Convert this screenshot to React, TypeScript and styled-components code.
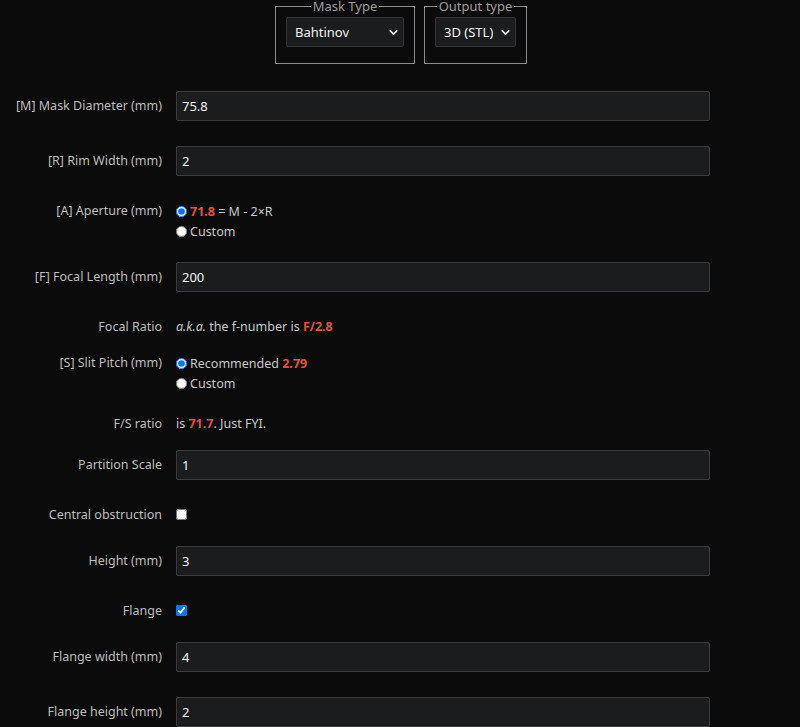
import React from "react";
import styled, { createGlobalStyle } from "styled-components";
import { ChevronDown } from "lucide-react";

const GlobalStyle = createGlobalStyle`
  html, body {
    margin: 0;
    padding: 0;
    background: #0b0b0b;
    color: #c4c4c4;
    font-family: "Noto Sans", "Open Sans", Arial, sans-serif;
    font-size: 12.5px;
  }
`;

type RowKind = "input" | "choice" | "text";

export default function App() {
    return (
        <>
            <GlobalStyle />
            <Page>
                <TypeBar>
                    <TypeBox>
                        <Legend>Mask Type</Legend>
                        <SelectWrap>
                            <Select $width={118} defaultValue="Bahtinov">
                                <option>Bahtinov</option>
                                <option>Carey</option>
                                <option>Tri-Bahtinov</option>
                            </Select>
                            <Arrow size={13} strokeWidth={3} />
                        </SelectWrap>
                    </TypeBox>
                    <TypeBox>
                        <Legend>Output type</Legend>
                        <SelectWrap>
                            <Select $width={81} defaultValue="3D (STL)">
                                <option>3D (STL)</option>
                                <option>2D (SVG)</option>
                            </Select>
                            <Arrow size={13} strokeWidth={3} />
                        </SelectWrap>
                    </TypeBox>
                </TypeBar>

                <Form>
                    <Row $kind="input">
                        <Label>[M] Mask Diameter (mm)</Label>
                        <TextInput defaultValue="75.8" />
                    </Row>
                    <Row $kind="input">
                        <Label>[R] Rim Width (mm)</Label>
                        <TextInput defaultValue="2" />
                    </Row>
                    <Row $kind="choice">
                        <Label>[A] Aperture (mm)</Label>
                        <Choices>
                            <Choice>
                                <input type="radio" name="aperture" defaultChecked />
                                <Hot>71.8</Hot> = M - 2×R
                            </Choice>
                            <Choice>
                                <input type="radio" name="aperture" />
                                Custom
                            </Choice>
                        </Choices>
                    </Row>
                    <Row $kind="input">
                        <Label>[F] Focal Length (mm)</Label>
                        <TextInput defaultValue="200" />
                    </Row>
                    <Row $kind="text">
                        <Label>Focal Ratio</Label>
                        <Note>
                            <i>a.k.a.</i> the f-number is <Hot>F/2.8</Hot>
                        </Note>
                    </Row>
                    <Row $kind="choice">
                        <Label>[S] Slit Pitch (mm)</Label>
                        <Choices>
                            <Choice>
                                <input type="radio" name="pitch" defaultChecked />
                                Recommended <Hot>2.79</Hot>
                            </Choice>
                            <Choice>
                                <input type="radio" name="pitch" />
                                Custom
                            </Choice>
                        </Choices>
                    </Row>
                    <Row $kind="text">
                        <Label>F/S ratio</Label>
                        <Note>
                            is <Hot>71.7</Hot>. Just FYI.
                        </Note>
                    </Row>
                    <Row $kind="input">
                        <Label>Partition Scale</Label>
                        <TextInput defaultValue="1" />
                    </Row>
                    <Row $kind="choice">
                        <Label>Central obstruction</Label>
                        <Check type="checkbox" />
                    </Row>
                    <Row $kind="input">
                        <Label>Height (mm)</Label>
                        <TextInput defaultValue="3" />
                    </Row>
                    <Row $kind="choice">
                        <Label>Flange</Label>
                        <Check type="checkbox" defaultChecked />
                    </Row>
                    <Row $kind="input">
                        <Label>Flange width (mm)</Label>
                        <TextInput defaultValue="4" />
                    </Row>
                    <Row $kind="input">
                        <Label>Flange height (mm)</Label>
                        <TextInput defaultValue="2" />
                    </Row>
                </Form>
            </Page>
        </>
    );
}

const Page = styled.div`
    width: 800px;
`;

const TypeBar = styled.div`
    display: flex;
    justify-content: center;
    gap: 9px;
    padding-left: 2px;
`;

const TypeBox = styled.fieldset`
    margin: 0;
    padding: 4px 10px 16px;
    border: 1px solid #8d8d8d;
    border-radius: 0;
    min-width: 0;
`;

const Legend = styled.legend`
    margin: 0 auto;
    padding: 0 2px;
    font-size: 13px;
    line-height: 13px;
    color: #9d9d9d;
`;

const SelectWrap = styled.div`
    position: relative;
`;

const Select = styled.select<{ $width: number }>`
    appearance: none;
    width: ${(p) => p.$width}px;
    height: 30px;
    padding: 0 22px 0 8px;
    background: #1b1c1e;
    border: 1px solid #333436;
    border-radius: 2px;
    color: #f2f2f2;
    font-family: inherit;
    font-size: 13px;
    font-weight: 400;
    outline: none;
`;

const Arrow = styled(ChevronDown)`
    position: absolute;
    right: 4px;
    top: 9px;
    color: #e8e8e8;
    pointer-events: none;
`;

const Form = styled.div`
    display: flex;
    flex-direction: column;
    padding-top: 27px;
`;

const rowSpace: Record<RowKind, number> = {
    input: 25,
    choice: 21,
    text: 16,
};

const Row = styled.div<{ $kind: RowKind }>`
    display: grid;
    grid-template-columns: 162px 534px;
    column-gap: 14px;
    align-items: ${(p) => (p.$kind === "input" ? "center" : "start")};
    margin-bottom: ${(p) => rowSpace[p.$kind]}px;
`;

const Label = styled.div`
    text-align: right;
    line-height: 20px;
    color: #bdbdbd;
    white-space: nowrap;
`;

const TextInput = styled.input`
    box-sizing: border-box;
    width: 534px;
    height: 30px;
    padding: 0 5px;
    background: #1b1c1e;
    border: 1px solid #3a3b3d;
    border-radius: 2px;
    color: #f4f4f4;
    font-family: inherit;
    font-size: 13px;
    outline: none;
`;

const Choices = styled.div`
    display: flex;
    flex-direction: column;
`;

const Choice = styled.label`
    display: flex;
    align-items: center;
    height: 20px;
    color: #c8c8c8;
    white-space: pre;

    input {
        margin: 0 3px 0 0;
        width: 11px;
        height: 11px;
    }
`;

const Note = styled.div`
    line-height: 20px;
    color: #c8c8c8;
`;

const Hot = styled.b`
    color: #e5533a;
    font-weight: 700;
`;

const Check = styled.input`
    margin: 4px 0 0;
    width: 11px;
    height: 11px;
`;
